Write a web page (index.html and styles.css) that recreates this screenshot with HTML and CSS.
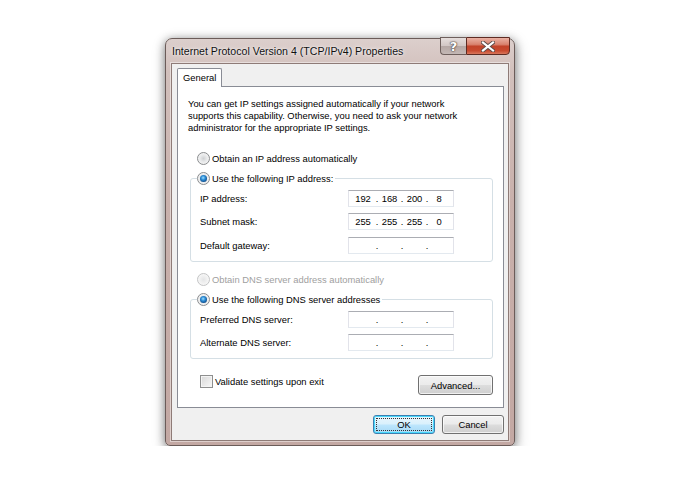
FILE: index.html
```html
<!DOCTYPE html>
<html>
<head>
<meta charset="utf-8">
<link rel="stylesheet" href="styles.css">
</head>
<body>
<div class="stage">
  <div class="window">
    <div class="titlebar">
      <span class="title">Internet Protocol Version 4 (TCP/IPv4) Properties</span>
      <div class="caption">
        <div class="cap help"><span class="q">?</span></div>
        <div class="cap close">
          <svg width="14" height="11" viewBox="0 0 14 11">
            <path d="M2 1.5 L12 9.5 M12 1.5 L2 9.5" stroke="#5b4a48" stroke-width="4" stroke-linecap="square" fill="none"/>
            <path d="M2 1.5 L12 9.5 M12 1.5 L2 9.5" stroke="#ffffff" stroke-width="2.2" stroke-linecap="square" fill="none"/>
          </svg>
        </div>
      </div>
    </div>
    <div class="client">
      <div class="tabs"><div class="tab">General</div></div>
      <div class="panel">
        <p class="intro">You can get IP settings assigned automatically if your network<br>supports this capability. Otherwise, you need to ask your network<br>administrator for the appropriate IP settings.</p>
        <div class="opt first"><span class="radio"></span><span>Obtain an IP address automatically</span></div>
        <div class="group ipgroup">
          <div class="legend"><span class="radio checked"></span><span>Use the following IP address:</span></div>
          <div class="rows">
            <div class="row"><span class="lbl">IP address:</span><div class="ip"><span>192</span><span>.</span><span>168</span><span>.</span><span>200</span><span>.</span><span>8</span></div></div>
            <div class="row"><span class="lbl">Subnet mask:</span><div class="ip"><span>255</span><span>.</span><span>255</span><span>.</span><span>255</span><span>.</span><span>0</span></div></div>
            <div class="row"><span class="lbl">Default gateway:</span><div class="ip"><span></span><span>.</span><span></span><span>.</span><span></span><span>.</span><span></span></div></div>
          </div>
        </div>
        <div class="opt dns disabled"><span class="radio"></span><span>Obtain DNS server address automatically</span></div>
        <div class="group dnsgroup">
          <div class="legend"><span class="radio checked"></span><span>Use the following DNS server addresses</span></div>
          <div class="rows">
            <div class="row"><span class="lbl">Preferred DNS server:</span><div class="ip"><span></span><span>.</span><span></span><span>.</span><span></span><span>.</span><span></span></div></div>
            <div class="row"><span class="lbl">Alternate DNS server:</span><div class="ip"><span></span><span>.</span><span></span><span>.</span><span></span><span>.</span><span></span></div></div>
          </div>
        </div>
        <div class="bottom">
          <div class="check"><span class="box"></span><span>Validate settings upon exit</span></div>
          <div class="btn adv">Advanced...</div>
        </div>
      </div>
      <div class="actions">
        <div class="btn default"><span class="focus">OK</span></div>
        <div class="btn">Cancel</div>
      </div>
    </div>
  </div>
</div>
</body>
</html>
```
FILE: styles.css
```css
html, body {
  margin: 0;
  background: #ffffff;
}
body {
  font-family: "Liberation Sans", Arial, sans-serif;
  font-size: 9.4px;
  color: #000;
}
.stage {
  padding: 38px 0 0 165px;
}
.window {
  width: 350px;
  height: 408px;
  box-sizing: border-box;
  border: 1px solid #6b5c59;
  border-radius: 7px 7px 5px 5px;
  background: linear-gradient(180deg, #dccfcc 0%, #d2c0bc 8%, #c9b1ac 40%, #c3a8a3 100%);
  box-shadow: 0 2px 10px rgba(0,0,0,0.45), 1px 4px 16px rgba(0,0,0,0.2);
  padding: 0 5px 5px;
  display: flex;
  flex-direction: column;
}
.titlebar {
  height: 24px;
  display: flex;
  justify-content: space-between;
  align-items: flex-start;
}
.title {
  font-size: 10.6px;
  line-height: 24px;
  padding-left: 1px;
  color: #111;
  text-shadow: 0 0 5px rgba(255,255,255,0.9), 0 0 2px rgba(255,255,255,0.8);
}
.caption {
  display: flex;
  margin-top: -2px;
  margin-right: -1px;
}
.cap {
  height: 18px;
  box-sizing: border-box;
  display: flex;
  align-items: center;
  justify-content: center;
}
.help {
  width: 26px;
  border: 1px solid #6e5f5c;
  border-right: none;
  border-radius: 0 0 0 4px;
  background: linear-gradient(180deg, #e6dedc 0%, #d2c7c5 48%, #b5a7a4 52%, #c4b8b5 100%);
}
.q {
  font-family: "DejaVu Sans", sans-serif;
  font-weight: bold;
  font-size: 13px;
  line-height: 13px;
  color: #fff;
  text-shadow: 0 0 1px #4d4240, 0 0 1px #4d4240, 0 0 2px #4d4240;
}
.close {
  width: 44px;
  border: 1px solid #5e2b22;
  border-radius: 0 0 4px 0;
  background: linear-gradient(180deg, #eab1a3 0%, #d9836f 40%, #c2432a 52%, #c84a2f 80%, #d9775c 100%);
}
.client {
  flex: 1;
  box-sizing: border-box;
  background: #f0f0f0;
  border: 1px solid #8e7b77;
  box-shadow: 0 0 0 1px rgba(255,255,255,0.45);
  padding: 4px 4px 6px 5px;
  display: flex;
  flex-direction: column;
}
.tabs {
  height: 18px;
  display: flex;
}
.tab {
  position: relative;
  z-index: 1;
  height: 19px;
  box-sizing: border-box;
  padding: 0 5px;
  width: 45px;
  border: 1px solid #898c95;
  border-bottom: none;
  border-radius: 2px 2px 0 0;
  background: #fff;
  line-height: 18px;
  text-align: center;
}
.panel {
  width: 327px;
  height: 322px;
  box-sizing: border-box;
  border: 1px solid #898c95;
  background: #fff;
  display: flex;
  flex-direction: column;
}
.intro {
  margin: 11px 0 0 10px;
  line-height: 12px;
}
.opt {
  display: flex;
  align-items: center;
  height: 14px;
  margin-left: 19px;
}
.opt.first {
  margin-top: 17px;
}
.opt.dns {
  margin-top: 10px;
}
.opt.disabled {
  color: #a0a0a0;
}
.radio {
  width: 13px;
  height: 13px;
  box-sizing: border-box;
  border-radius: 50%;
  border: 1px solid #8a8c8e;
  background: radial-gradient(circle at 50% 50%, #cfd1d3 0, #e9eaeb 45%, #fbfbfb 100%);
  margin-right: 2px;
  flex: none;
  display: flex;
  align-items: center;
  justify-content: center;
}
.disabled .radio {
  border-color: #c3c4c5;
  background: radial-gradient(circle, #e4e5e6 0, #f4f4f4 60%, #fdfdfd 100%);
}
.radio.checked::after {
  content: "";
  width: 7px;
  height: 7px;
  border-radius: 50%;
  background: radial-gradient(circle at 45% 40%, #9fe0ff 0, #2f8fd8 35%, #0d4c8c 75%, #0a3566 100%);
}
.group {
  margin-left: 12px;
  width: 303px;
  box-sizing: border-box;
  border: 1px solid #d5dfe5;
  border-radius: 3px;
  padding: 0 0 7px 9px;
  display: flex;
  flex-direction: column;
}
.ipgroup {
  margin-top: 13px;
}
.dnsgroup {
  margin-top: 13px;
  padding-bottom: 7px;
}
.legend {
  display: flex;
  align-items: center;
  align-self: flex-start;
  height: 14px;
  margin-top: -8px;
  margin-left: -3px;
  padding-right: 2px;
  background: #fff;
}
.rows {
  display: flex;
  flex-direction: column;
  margin-top: 5px;
}
.row {
  display: flex;
  align-items: center;
  height: 17px;
}
.row + .row {
  margin-top: 6px;
}
.ipgroup .row:nth-child(3) {
  margin-top: 7px;
}
.lbl {
  width: 148px;
}
.ip {
  width: 106px;
  height: 17px;
  box-sizing: border-box;
  border: 1px solid #e2e3ea;
  border-top-color: #abadb3;
  border-bottom-color: #e3e9ef;
  display: grid;
  grid-template-columns: 24px 4px 21px 4px 21px 4px 20px;
  padding-left: 2px;
  align-items: center;
  text-align: center;
  line-height: 15px;
}
.bottom {
  display: flex;
  align-items: flex-start;
  justify-content: space-between;
  margin-top: 16px;
  padding: 0 10px 0 22px;
}
.check {
  display: flex;
  align-items: center;
  height: 13px;
}
.box {
  width: 13px;
  height: 13px;
  box-sizing: border-box;
  border: 1px solid #8e8f8f;
  background: linear-gradient(135deg, #d8d8d8 0%, #e8e8e8 50%, #f8f8f8 100%);
  box-shadow: inset 0 0 0 1px #f4f4f4;
  margin-right: 2px;
}
.btn {
  height: 19px;
  width: 62px;
  box-sizing: border-box;
  border: 1px solid #707070;
  border-radius: 3px;
  background: linear-gradient(180deg, #f2f2f2 0%, #ebebeb 49%, #dddddd 51%, #cfcfcf 100%);
  box-shadow: inset 0 0 0 1px rgba(255,255,255,0.7);
  display: flex;
  align-items: center;
  justify-content: center;
}
.btn.adv {
  width: 75px;
  height: 20px;
}
.actions {
  display: flex;
  justify-content: flex-end;
  gap: 7px;
  margin-top: 7px;
  padding-right: 0;
}
.btn.default {
  border-color: #3c7fb1;
  background: linear-gradient(180deg, #eaf6fd 0%, #d9f0fc 49%, #bee6fd 51%, #a7d9f5 100%);
  box-shadow: inset 0 0 0 1px #48d8fb;
  padding: 2px;
}
.focus {
  flex: 1;
  align-self: stretch;
  border: 1px dotted #333;
  display: flex;
  align-items: center;
  justify-content: center;
}
```
